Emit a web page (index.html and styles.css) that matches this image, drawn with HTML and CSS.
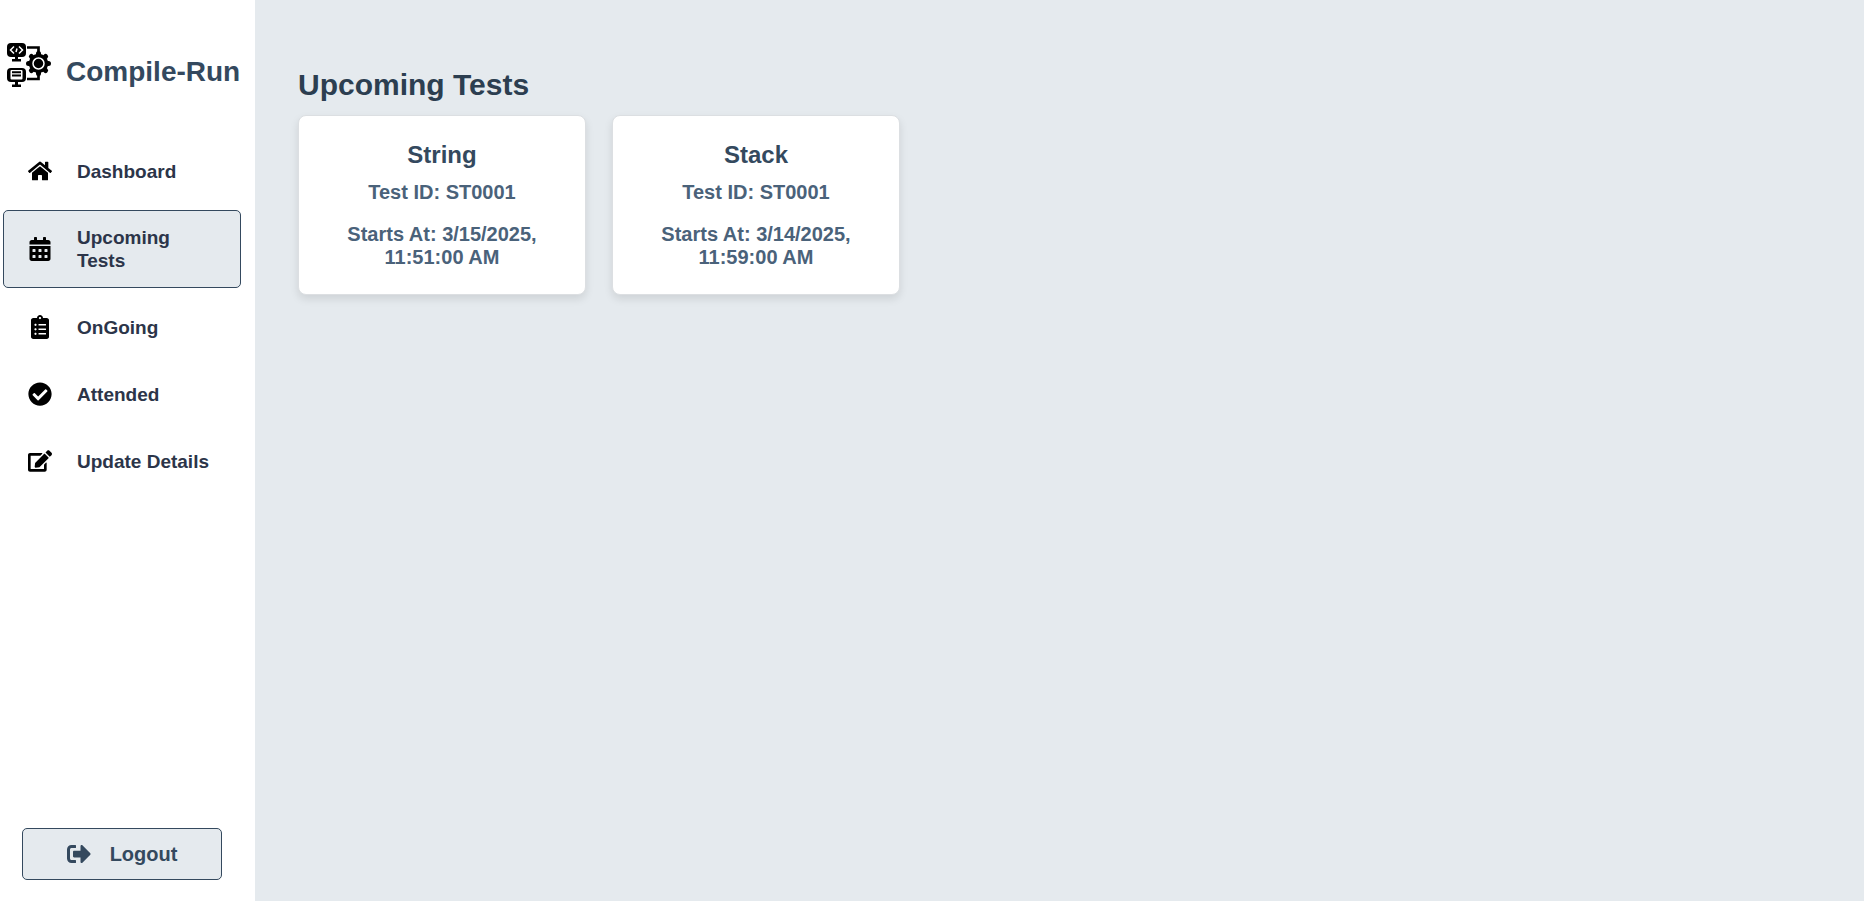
FILE: index.html
```html
<!DOCTYPE html>
<html lang="en">
<head>
<meta charset="utf-8">
<title>Compile-Run</title>
<link rel="stylesheet" href="styles.css">
</head>
<body>
<div class="app">
  <aside class="sidebar">
    <div class="brand">
      <svg class="brand-logo" viewBox="0 0 44 44" aria-hidden="true">
        <rect x="0" y="0" width="19" height="14" rx="4"/>
        <path d="M8 14h3v2h3v2.500H5V16h3z"/>
        <path d="M7 3.500L3.500 7l3.500 3.500M12 3.500L15.500 7 12 10.500M10 5.500l-1 3.500" fill="none" stroke="#fff" stroke-width="1.500"/>
        <rect x="0" y="25" width="19" height="14" rx="4"/>
        <path d="M8 39h3v2.500h3V44H5v-2.500h3z"/>
        <rect x="3.500" y="27" width="12" height="9.500" rx="1" fill="#fff"/>
        <path d="M5 28.200h9v2H5zM5 31.500h9v2H5z"/>
        <path d="M20 4.500h11.500V10M20 36h11.500v-6" fill="none" stroke="#000" stroke-width="2.700"/>
        <path class="brand-gear" d="M31.500 10.500v20M21.500 20.500h20M24.400 13.400l14.200 14.200M38.600 13.400L24.400 27.600"/>
        <circle cx="31.500" cy="20.500" r="9.700"/>
        <circle cx="31.500" cy="20.500" r="5.500" fill="none" stroke="#fff" stroke-width="1.500"/>
      </svg>
      <h1 class="brand-name">Compile-Run</h1>
    </div>
    <nav class="nav">
      <a class="nav-link" href="#">
        <svg class="icon" viewBox="0 0 576 512" aria-hidden="true"><path d="M280.370 148.260L96 300.110V464a16 16 0 0 0 16 16l112.060-.290a16 16 0 0 0 15.920-16V368a16 16 0 0 1 16-16h64a16 16 0 0 1 16 16v95.640a16 16 0 0 0 16 16.050L464 480a16 16 0 0 0 16-16V300L295.670 148.260a12.190 12.190 0 0 0-15.300 0zM571.600 251.470L488 182.560V44.050a12 12 0 0 0-12-12h-56a12 12 0 0 0-12 12v72.610L318.470 43a48 48 0 0 0-61 0L4.340 251.470a12 12 0 0 0-1.600 16.900l25.500 31A12 12 0 0 0 45.150 301l235.220-193.740a12.190 12.190 0 0 1 15.300 0L530.900 301a12 12 0 0 0 16.900-1.600l25.500-31a12 12 0 0 0-1.700-16.930z"/></svg>
        <span>Dashboard</span>
      </a>
      <a class="nav-link nav-link-active" href="#" aria-current="page">
        <svg class="icon" viewBox="0 0 448 512" aria-hidden="true"><path d="M0 464c0 26.500 21.500 48 48 48h352c26.500 0 48-21.500 48-48V192H0v272zm320-196c0-6.600 5.400-12 12-12h40c6.600 0 12 5.400 12 12v40c0 6.600-5.400 12-12 12h-40c-6.600 0-12-5.400-12-12v-40zm0 128c0-6.600 5.400-12 12-12h40c6.600 0 12 5.400 12 12v40c0 6.600-5.400 12-12 12h-40c-6.600 0-12-5.400-12-12v-40zM192 268c0-6.600 5.400-12 12-12h40c6.600 0 12 5.400 12 12v40c0 6.600-5.400 12-12 12h-40c-6.600 0-12-5.400-12-12v-40zm0 128c0-6.600 5.400-12 12-12h40c6.600 0 12 5.400 12 12v40c0 6.600-5.400 12-12 12h-40c-6.600 0-12-5.400-12-12v-40zM64 268c0-6.600 5.400-12 12-12h40c6.600 0 12 5.400 12 12v40c0 6.600-5.400 12-12 12H76c-6.600 0-12-5.400-12-12v-40zm0 128c0-6.600 5.400-12 12-12h40c6.600 0 12 5.400 12 12v40c0 6.600-5.400 12-12 12H76c-6.600 0-12-5.400-12-12v-40zM400 64h-48V16c0-8.800-7.200-16-16-16h-32c-8.800 0-16 7.200-16 16v48H160V16c0-8.800-7.200-16-16-16h-32c-8.800 0-16 7.200-16 16v48H48C21.500 64 0 85.500 0 112v48h448v-48c0-26.500-21.500-48-48-48z"/></svg>
        <span>Upcoming Tests</span>
      </a>
      <a class="nav-link" href="#">
        <svg class="icon" viewBox="0 0 384 512" aria-hidden="true"><path d="M336 64h-80c0-35.300-28.700-64-64-64s-64 28.700-64 64H48C21.500 64 0 85.500 0 112v352c0 26.500 21.500 48 48 48h288c26.500 0 48-21.500 48-48V112c0-26.500-21.500-48-48-48zM96 424c-13.300 0-24-10.700-24-24s10.700-24 24-24 24 10.700 24 24-10.700 24-24 24zm0-96c-13.300 0-24-10.700-24-24s10.700-24 24-24 24 10.700 24 24-10.700 24-24 24zm0-96c-13.300 0-24-10.700-24-24s10.700-24 24-24 24 10.700 24 24-10.700 24-24 24zm96-192c13.300 0 24 10.700 24 24s-10.700 24-24 24-24-10.700-24-24 10.700-24 24-24zm128 368c0 4.400-3.600 8-8 8H168c-4.400 0-8-3.600-8-8v-16c0-4.400 3.600-8 8-8h144c4.400 0 8 3.600 8 8v16zm0-96c0 4.400-3.600 8-8 8H168c-4.400 0-8-3.600-8-8v-16c0-4.400 3.600-8 8-8h144c4.400 0 8 3.600 8 8v16zm0-96c0 4.400-3.600 8-8 8H168c-4.400 0-8-3.600-8-8v-16c0-4.400 3.600-8 8-8h144c4.400 0 8 3.600 8 8v16z"/></svg>
        <span>OnGoing</span>
      </a>
      <a class="nav-link" href="#">
        <svg class="icon" viewBox="0 0 512 512" aria-hidden="true"><path d="M504 256c0 136.967-111.033 248-248 248S8 392.967 8 256 119.033 8 256 8s248 111.033 248 248zM227.314 387.314l184-184c6.248-6.248 6.248-16.379 0-22.627l-22.627-22.627c-6.248-6.249-16.379-6.249-22.628 0L216 308.118l-70.059-70.059c-6.248-6.248-16.379-6.248-22.628 0l-22.627 22.627c-6.248 6.248-6.248 16.379 0 22.627l104 104c6.249 6.249 16.379 6.249 22.628.001z"/></svg>
        <span>Attended</span>
      </a>
      <a class="nav-link" href="#">
        <svg class="icon" viewBox="0 0 576 512" aria-hidden="true"><path d="M402.600 83.200l90.200 90.200c3.800 3.800 3.800 10 0 13.800L274.400 405.600l-92.800 10.300c-12.400 1.400-22.900-9.100-21.500-21.500l10.300-92.800L388.800 83.200c3.800-3.800 10-3.800 13.800 0zm162-22.900l-48.800-48.800c-15.200-15.200-39.900-15.200-55.200 0l-35.400 35.400c-3.800 3.800-3.800 10 0 13.800l90.200 90.200c3.800 3.800 10 3.800 13.800 0l35.400-35.400c15.200-15.300 15.200-40 0-55.200zM384 346.200V448H64V128h229.800c3.200 0 6.200-1.300 8.500-3.500l40-40c7.600-7.600 2.200-20.500-8.500-20.500H48C21.500 64 0 85.500 0 112v352c0 26.500 21.500 48 48 48h352c26.500 0 48-21.500 48-48V306.200c0-10.700-12.900-16-20.500-8.500l-40 40c-2.200 2.300-3.500 5.300-3.500 8.500z"/></svg>
        <span>Update Details</span>
      </a>
    </nav>
    <button class="logout" type="button">
      <svg class="icon" viewBox="0 0 512 512" aria-hidden="true"><path d="M497 273L329 441c-15 15-41 4.500-41-17v-96H152c-13.300 0-24-10.700-24-24v-96c0-13.300 10.700-24 24-24h136V88c0-21.400 25.900-32 41-17l168 168c9.300 9.400 9.300 24.600 0 34zM192 436v-40c0-6.600-5.400-12-12-12H96c-17.700 0-32-14.300-32-32V160c0-17.700 14.300-32 32-32h84c6.600 0 12-5.400 12-12V76c0-6.600-5.400-12-12-12H96c-53 0-96 43-96 96v192c0 53 43 96 96 96h84c6.600 0 12-5.400 12-12z"/></svg>
      <span>Logout</span>
    </button>
  </aside>
  <main class="content">
    <h2 class="content-title">Upcoming Tests</h2>
    <div class="cards">
      <article class="card">
        <h3 class="card-title">String</h3>
        <p class="card-text">Test ID: ST0001</p>
        <p class="card-text">Starts At: 3/15/2025, 11:51:00 AM</p>
      </article>
      <article class="card">
        <h3 class="card-title">Stack</h3>
        <p class="card-text">Test ID: ST0001</p>
        <p class="card-text">Starts At: 3/14/2025, 11:59:00 AM</p>
      </article>
    </div>
  </main>
</div>
</body>
</html>
```

FILE: styles.css
```css
* {
  box-sizing: border-box;
}

body {
  margin: 0;
  font-family: "Liberation Sans", Arial, sans-serif;
  font-weight: bold;
  background: #e5eaee;
}

h1, h2, h3, p {
  margin: 0;
}

.app {
  display: flex;
  min-height: 100vh;
}

.sidebar {
  display: flex;
  flex-direction: column;
  flex: 0 0 255px;
  padding: 43px 14px 21px 3px;
  background: #fff;
}

.brand {
  display: flex;
  align-items: flex-start;
  gap: 15px;
  padding-left: 4px;
}

.brand-logo {
  flex: none;
  width: 44px;
  height: 44px;
}

.brand-gear {
  fill: none;
  stroke: #000;
  stroke-width: 5;
  stroke-linecap: round;
}

.brand-name {
  padding-top: 13px;
  font-size: 28px;
  line-height: 32px;
  color: #34495e;
}

.nav {
  display: flex;
  flex-direction: column;
  gap: 11px;
  margin-top: 55px;
}

.nav-link {
  display: flex;
  align-items: center;
  gap: 25px;
  padding: 15px 24px;
  border: 1px solid transparent;
  border-radius: 5px;
  font-size: 19px;
  line-height: 23px;
  color: #2c3549;
  text-decoration: none;
}

.nav-link .icon {
  color: #000;
}

.nav-link-active {
  border-color: #34495e;
  background: #e5eaee;
}

.icon {
  flex: none;
  width: 24px;
  height: 24px;
  fill: currentColor;
}

.logout {
  display: flex;
  align-items: center;
  justify-content: center;
  gap: 19px;
  margin: auto 19px 0 19px;
  padding: 13px;
  border: 1px solid #34495e;
  border-radius: 5px;
  background: #e5eaee;
  font: inherit;
  font-size: 20px;
  line-height: 23px;
  color: #34495e;
}

.content {
  flex: 1;
  padding: 68px 22px 26px 43px;
}

.content-title {
  font-size: 30px;
  line-height: 34px;
  color: #2c3e50;
}

.cards {
  display: grid;
  grid-template-columns: repeat(auto-fill, minmax(270px, 1fr));
  gap: 26px;
  margin-top: 13px;
}

.card {
  padding: 25px;
  border: 1px solid #dcdfe2;
  border-radius: 8px;
  background: #fff;
  box-shadow: 0 4px 8px rgba(0, 0, 0, 0.1);
  text-align: center;
}

.card-title {
  margin-bottom: 13px;
  font-size: 24px;
  line-height: 27px;
  color: #34495e;
}

.card-text {
  font-size: 20px;
  line-height: 23px;
  color: #4a627a;
}

.card-text + .card-text {
  margin-top: 19px;
}
```
